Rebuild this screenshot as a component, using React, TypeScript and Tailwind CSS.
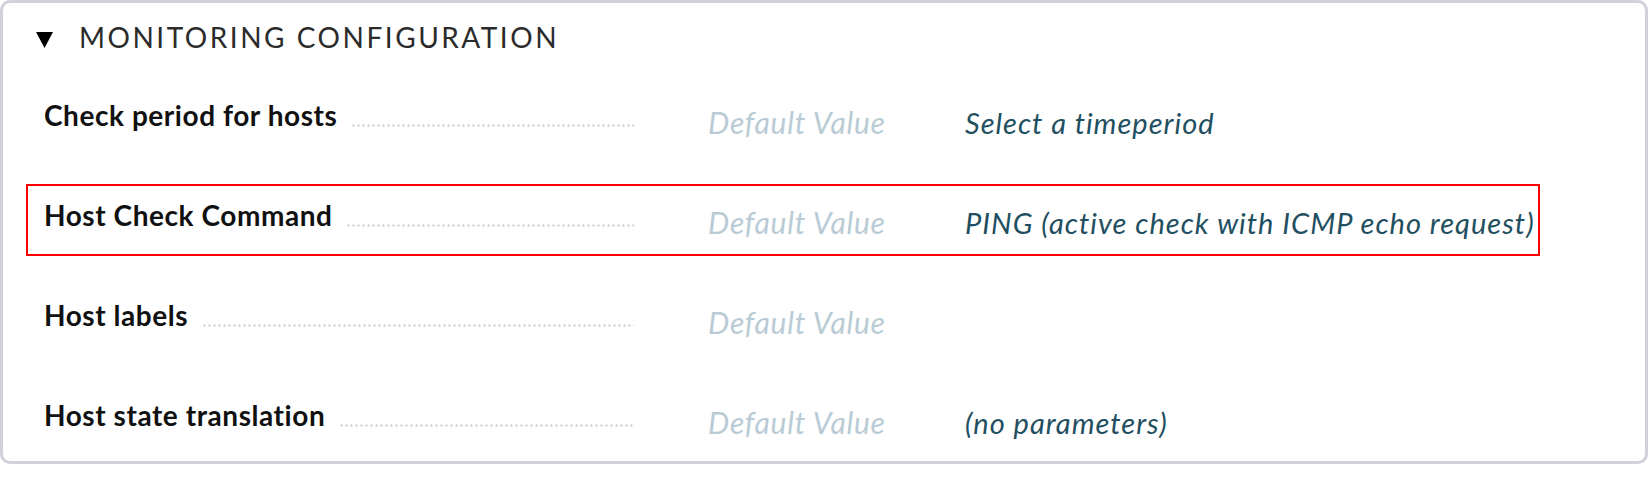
import React from 'react';

const ROWS = [
  { label: 'Check period for hosts', value: 'Select a timeperiod' },
  { label: 'Host Check Command', value: 'PING (active check with ICMP echo request)', highlighted: true },
  { label: 'Host labels', value: '' },
  { label: 'Host state translation', value: '(no parameters)' },
];

function Row({ label, value, highlighted }: { label: string; value: string; highlighted?: boolean }) {
  return (
    <div className="h-[100px] flex items-center pl-[23px] pr-[105px]">
      <div
        className={
          'flex-1 h-[72px] flex items-center pl-[16px] ' +
          (highlighted ? 'border-2 border-[#ff0000]' : 'border-2 border-transparent')
        }
      >
        <div className="w-[590px] flex items-end mb-[10px]">
          <span className="text-[28px] font-bold text-[#111] tracking-[0.02em] leading-none whitespace-nowrap">{label}</span>
          <span className="flex-1 ml-[14px] h-[3px] mb-[2px] bg-[radial-gradient(circle,#d6d6d6_1px,transparent_1.4px)] bg-[length:5px_3px] bg-repeat-x" />
        </div>
        <div className="w-[331px] pl-[74px] pt-[4px] text-[30px] leading-none italic text-[#b9cbd5] tracking-[0.025em] whitespace-nowrap">Default Value</div>
        <div className="pt-[4px] text-[29px] leading-none italic text-[#1f4f60] tracking-[0.035em] whitespace-nowrap">{value}</div>
      </div>
    </div>
  );
}

export default function App() {
  return (
    <div className="w-[1650px] h-[486px] bg-white font-['Lato','Liberation_Sans',sans-serif]">
      <div className="w-[1648px] h-[464px] border-[3px] border-[#cfd1dd] rounded-[10px] bg-white">
        <div className="h-[67px] flex items-center pl-[33px] gap-[26px]">
          <svg width="17" height="16" viewBox="0 0 17 16" className="mt-[6px]">
            <path d="M0 0 H17 L8.5 16 Z" fill="#000" />
          </svg>
          <span className="text-[28px] text-[#2b2b2b] tracking-[0.09em] uppercase">Monitoring Configuration</span>
        </div>
        {ROWS.map((r) => (
          <Row key={r.label} {...r} />
        ))}
      </div>
    </div>
  );
}
